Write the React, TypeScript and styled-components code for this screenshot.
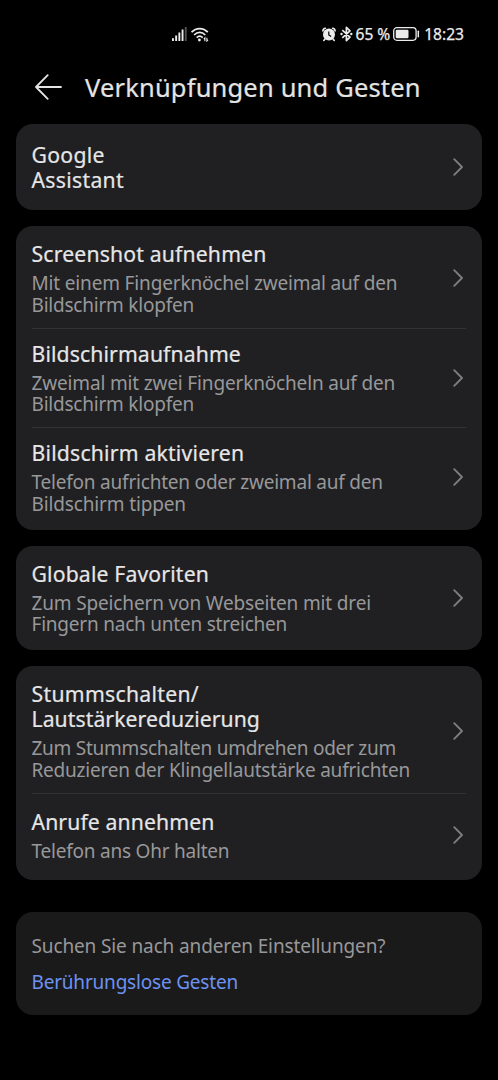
import React from "react";
import styled, { createGlobalStyle } from "styled-components";

const GlobalStyle = createGlobalStyle`
  * { box-sizing: border-box; }
  body {
    margin: 0;
    background: #000;
    font-family: "Noto Sans", "Open Sans", sans-serif;
  }
`;

const Screen = styled.main`
  display: flex;
  flex-direction: column;
  min-height: 1080px;
  background: #000;
`;

const StatusBar = styled.header`
  display: flex;
  align-items: center;
  justify-content: space-between;
  height: 68px;
  padding: 0 34px 0 172px;
  color: #ececec;
`;

const StatusGroup = styled.div<{ $gap: number }>`
  display: flex;
  align-items: center;
  gap: ${(p) => p.$gap}px;
`;

const StatusText = styled.span<{ $inset?: number }>`
  margin: 0 ${(p) => -(p.$inset ?? 0)}px;
  font-size: 15.6px;
  line-height: 20px;
  white-space: nowrap;
  -webkit-text-stroke: 0.25px currentColor;
`;

const AppBar = styled.div`
  display: flex;
  align-items: center;
  gap: 23px;
  height: 38px;
  margin-bottom: 18px;
  padding-left: 35px;
  color: #e4e4e4;
`;

const Heading = styled.h1`
  margin: 0;
  font-size: 25.5px;
  line-height: 38px;
  font-weight: 400;
  letter-spacing: 0.17px;
  white-space: nowrap;
  -webkit-text-stroke: 0.2px currentColor;
`;

const CardList = styled.div`
  display: flex;
  flex-direction: column;
  gap: 16px;
  padding: 0 16px;
`;

const Card = styled.section`
  padding: 3px 0;
  border-radius: 17px;
  background: #202022;
`;

const Row = styled.div<{ $minHeight?: number }>`
  display: flex;
  align-items: center;
  justify-content: space-between;
  min-height: ${(p) => p.$minHeight ?? 84}px;
  margin: 0 16px;
  padding: 12px 0;

  & + & {
    border-top: 1px solid #323234;
  }
`;

const Texts = styled.div`
  display: flex;
  flex-direction: column;
  gap: 7px;
  margin: 0 0 -0.7px -0.5px;
`;

const Title = styled.div`
  font-size: 21.2px;
  line-height: 25px;
  color: #e6e6e7;
  -webkit-text-stroke: 0.2px currentColor;
`;

const Description = styled.div`
  font-size: 19px;
  line-height: 21.6px;
  color: #98989a;
`;

const Line = styled.span<{ $spacing: number }>`
  display: block;
  letter-spacing: ${(p) => p.$spacing}px;
  white-space: nowrap;
`;

const HintCard = styled.footer`
  display: flex;
  flex-direction: column;
  gap: 12px;
  height: 103px;
  margin-top: 16px;
  padding: 22px 15.5px 0;
  border-radius: 17px;
  background: #1a1a1a;
  font-size: 19px;
  line-height: 24px;
`;

const HintText = styled.div`
  color: #98989a;
`;

const HintLink = styled.a`
  color: #6c92f2;
`;

const SignalIcon = () => (
  <svg width="16" height="15" viewBox="0 0 16 15" fill="currentColor">
    <rect x="0" y="11.2" width="1.9" height="2.8" />
    <rect x="3.2" y="8.5" width="1.9" height="5.5" />
    <rect x="6.4" y="5.5" width="1.9" height="8.5" />
    <rect x="9.6" y="2.5" width="1.9" height="11.5" />
    <rect x="12.8" y="0" width="1.9" height="14" opacity="0.35" />
  </svg>
);

const WifiIcon = () => (
  <svg width="18" height="15" viewBox="0 0 18 15" fill="none" stroke="currentColor" strokeWidth="1.7">
    <path d="M0.6 5.2C5.2 0.3 12.2 0.3 16.8 5.2" />
    <path d="M3.1 8C6.4 4.6 11 4.6 14.3 8" />
    <path d="M5.7 10.7C7.5 8.9 9.9 8.9 11.7 10.7" />
    <circle cx="8.4" cy="13" r="1.4" fill="currentColor" stroke="none" />
    <path d="M13.9 14.2V11L12.8 12.2M15.9 10.8V14L17 12.8" strokeWidth="1.1" />
  </svg>
);

const AlarmIcon = () => (
  <svg width="14" height="15" viewBox="0 0 14 15">
    <circle cx="7" cy="7.6" r="6" fill="currentColor" />
    <path
      d="M0.9 4C1 2.5 2 1.5 3.4 1.3M13.1 4C13 2.5 12 1.5 10.6 1.3M3 12L1.8 13.5M11 12L12.2 13.5"
      fill="none"
      stroke="currentColor"
      strokeWidth="1.6"
      strokeLinecap="round"
    />
    <path d="M6.8 4.4V8L9.1 9.6" fill="none" stroke="#000" strokeWidth="1.2" />
  </svg>
);

const BluetoothIcon = () => (
  <svg width="13" height="16" viewBox="0 0 13 16" fill="none" stroke="currentColor" strokeWidth="1.7">
    <path d="M2.3 4.2L10 11.2L6.4 14.6V1.4L10 4.8L2.3 11.8" strokeLinejoin="round" />
    <circle cx="1.5" cy="8" r="1.2" fill="currentColor" stroke="none" />
    <circle cx="11.3" cy="8" r="1.2" fill="currentColor" stroke="none" />
  </svg>
);

const BatteryIcon = () => (
  <svg width="27" height="14" viewBox="0 0 27 14">
    <rect x="0.7" y="0.7" width="22.4" height="12.6" rx="3.2" fill="none" stroke="currentColor" strokeWidth="1.3" />
    <rect x="2.7" y="2.7" width="12.8" height="8.6" rx="1.3" fill="currentColor" />
    <path d="M25.3 4.3V9.7" stroke="currentColor" strokeWidth="1.5" strokeLinecap="round" />
  </svg>
);

const BackIcon = () => (
  <svg width="27" height="26" viewBox="0 0 27 26" fill="none" stroke="currentColor" strokeWidth="1.8" strokeLinecap="round" strokeLinejoin="round">
    <path d="M12.7 1.2L1 13L12.7 24.8M1 13H26" />
  </svg>
);

const Chevron = () => (
  <svg width="16" height="18" viewBox="0 0 16 18" fill="none" stroke="#7e7e80" strokeWidth="1.8" strokeLinecap="round" strokeLinejoin="round">
    <path d="M4.2 1.2L12 9L4.2 16.8" />
  </svg>
);

type TextLine = [text: string, spacing: number];

interface Entry {
  title: TextLine[];
  description?: TextLine[];
  minHeight?: number;
}

const cards: Entry[][] = [
  [{ title: [["Google", 0.3], ["Assistant", 0.3]], minHeight: 80 }],
  [
    {
      title: [["Screenshot aufnehmen", 0.17]],
      description: [["Mit einem Fingerknöchel zweimal auf den", -0.16], ["Bildschirm klopfen", -0.22]],
    },
    {
      title: [["Bildschirmaufnahme", 0.12]],
      description: [["Zweimal mit zwei Fingerknöcheln auf den", -0.16], ["Bildschirm klopfen", -0.22]],
    },
    {
      title: [["Bildschirm aktivieren", 0.2]],
      description: [["Telefon aufrichten oder zweimal auf den", -0.21], ["Bildschirm tippen", -0.14]],
    },
  ],
  [
    {
      title: [["Globale Favoriten", 0.15]],
      description: [["Zum Speichern von Webseiten mit drei", -0.15], ["Fingern nach unten streichen", -0.22]],
    },
  ],
  [
    {
      title: [["Stummschalten/", 0.3], ["Lautstärkereduzierung", 0.06]],
      description: [["Zum Stummschalten umdrehen oder zum", -0.25], ["Reduzieren der Klingellautstärke aufrichten", -0.21]],
    },
    {
      title: [["Anrufe annehmen", 0.12]],
      description: [["Telefon ans Ohr halten", -0.22]],
      minHeight: 84.7,
    },
  ],
];

const Lines = ({ lines }: { lines: TextLine[] }) => (
  <>
    {lines.map(([text, spacing]) => (
      <Line key={text} $spacing={spacing}>{text}</Line>
    ))}
  </>
);

export default function App() {
  return (
    <Screen>
      <GlobalStyle />
      <StatusBar>
        <StatusGroup $gap={3}>
          <SignalIcon />
          <WifiIcon />
        </StatusGroup>
        <StatusGroup $gap={4}>
          <AlarmIcon />
          <BluetoothIcon />
          <StatusText $inset={1.2}>65 %</StatusText>
          <BatteryIcon />
          <StatusText>18:23</StatusText>
        </StatusGroup>
      </StatusBar>
      <AppBar>
        <BackIcon />
        <Heading>Verknüpfungen und Gesten</Heading>
      </AppBar>
      <CardList>
        {cards.map((entries) => (
          <Card key={entries[0].title[0][0]}>
            {entries.map((entry) => (
              <Row key={entry.title[0][0]} $minHeight={entry.minHeight}>
                <Texts>
                  <Title><Lines lines={entry.title} /></Title>
                  {entry.description && <Description><Lines lines={entry.description} /></Description>}
                </Texts>
                <Chevron />
              </Row>
            ))}
          </Card>
        ))}
        <HintCard>
          <HintText><Lines lines={[["Suchen Sie nach anderen Einstellungen?", -0.13]]} /></HintText>
          <HintLink><Lines lines={[["Berührungslose Gesten", -0.2]]} /></HintLink>
        </HintCard>
      </CardList>
    </Screen>
  );
}
